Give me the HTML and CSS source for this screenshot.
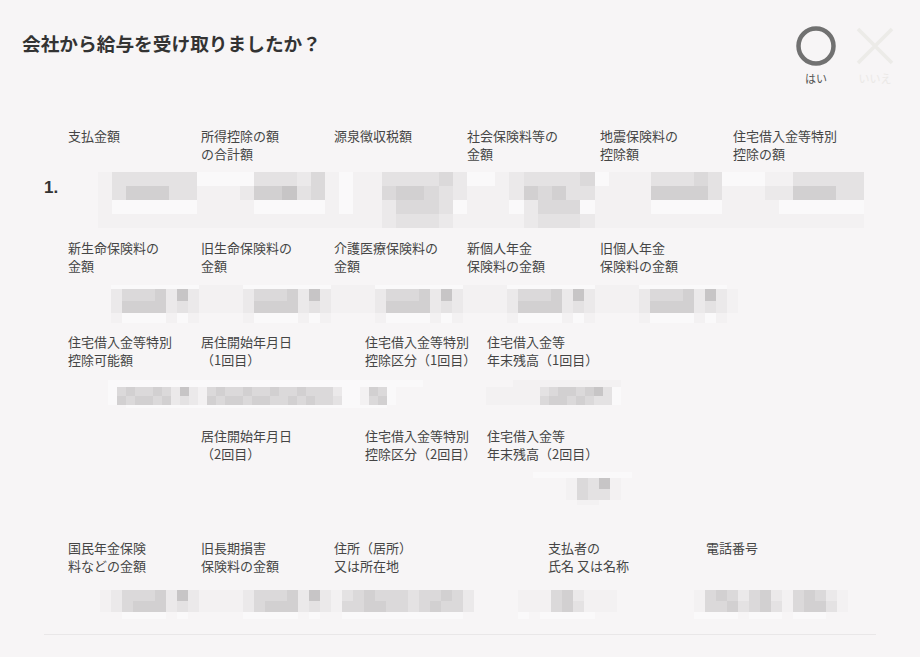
FILE: index.html
```html
<!DOCTYPE html>
<html lang="ja">
<head>
    <meta charset="UTF-8">
    <meta name="viewport" content="width=device-width, initial-scale=1.0">
    <title>給与の受け取り</title>
    <link rel="stylesheet" href="styles.css">
</head>
<body>
    <!-- Question header with yes / no answers -->
    <header class="question">
        <h1 class="question-title">会社から給与を受け取りましたか？</h1>
        <div class="answers">
            <button class="answer answer-yes">
                <svg width="40" height="40" viewBox="0 0 40 40">
                    <circle cx="20" cy="20" r="17.5" fill="none" stroke="#717171" stroke-width="4.5"/>
                </svg>
                <span>はい</span>
            </button>
            <button class="answer answer-no">
                <svg width="40" height="40" viewBox="0 0 40 40">
                    <path d="M3 3 L37 37 M37 3 L3 37" stroke="#ecebe8" stroke-width="3.5" fill="none"/>
                </svg>
                <span>いいえ</span>
            </button>
        </div>
    </header>

    <!-- Withholding slip fields (values are masked) -->
    <section class="slip">
        <div class="fields cols-6 row-1">
            <p>支払金額</p>
            <p>所得控除の額<br>の合計額</p>
            <p>源泉徴収税額</p>
            <p>社会保険料等の<br>金額</p>
            <p>地震保険料の<br>控除額</p>
            <p>住宅借入金等特別<br>控除の額</p>
        </div>
        <div class="values values-main">
            <span class="slip-no">1.</span>
            <div class="mosaic" data-w="14.2" data-h="14,14,14,14"
                 data-rows="1333333wwww333241w11333342ww1233334w11133343www1133333|1355533111255634 1w114554321112545331111555531112255533|1wwwwww1111wwwww1w1124443w111w2444w1111wwwww1111wwwwww|111111111111111111112333211111233321111111111111111111"></div>
        </div>

        <div class="fields cols-6 row-2">
            <p>新生命保険料の<br>金額</p>
            <p>旧生命保険料の<br>金額</p>
            <p>介護医療保険料の<br>金額</p>
            <p>新個人年金<br>保険料の金額</p>
            <p>旧個人年金<br>保険料の金額</p>
        </div>
        <div class="values values-2">
            <div class="mosaic" data-w="11" data-h="4,12,12,10"
                 data-rows="wwwwwwww1111wwwwwwww1111wwwwwwww1111wwwwwwww1111wwwwwwww|244452621111244452621111244452621111244452621111244452621|255552321111255552321111255552321111255552321111255552321|1wwww1w1....1wwww1w1....1wwww1w1....1wwww1w1....1wwww1w1"></div>
        </div>

        <div class="fields cols-loan row-3">
            <p>住宅借入金等特別<br>控除可能額</p>
            <p>居住開始年月日<br>（1回目）</p>
            <p>住宅借入金等特別<br>控除区分（1回目）</p>
            <p>住宅借入金等<br>年末残高（1回目）</p>
        </div>
        <div class="values values-3">
            <div class="mosaic" data-w="9" data-h="7,9,9,3"
                 data-rows="wwwwwwwwwwwwwwwwwwwwwwwwwwwwwwwwwww..........111111111111|w4544542621454454454454442ww154w..........1111113455456 3w|w545545232154554554454544 3ww145w..........1111114554543 3w|..wwwwwwwwwwwwwwwwwwwwwwwwwwwww"></div>
        </div>

        <div class="fields cols-loan row-4">
            <p></p>
            <p>居住開始年月日<br>（2回目）</p>
            <p>住宅借入金等特別<br>控除区分（2回目）</p>
            <p>住宅借入金等<br>年末残高（2回目）</p>
        </div>
        <div class="values values-4">
            <div class="mosaic" data-w="11" data-h="6,11,11,5"
                 data-rows="..wwwwwwwww|.....14361|.....14331|......11.."></div>
        </div>

        <div class="fields cols-payer row-5">
            <p>国民年金保険<br>料などの金額</p>
            <p>旧長期損害<br>保険料の金額</p>
            <p>住所（居所）<br>又は所在地</p>
            <p>支払者の<br>氏名 又は名称</p>
            <p>電話番号</p>
        </div>
        <div class="values values-5">
            <div class="mosaic" data-w="11" data-h="11,11,7"
                 data-rows="1244452621111244452621345444344542....111452111.......14542452145421|1245552321111245552321445544345442....111453111.......14453453145531|..wwww.w.....wwwww.w..wwwwwwwwwww.....w.wwwww.........wwww.www.www."></div>
        </div>

        <hr class="slip-rule">
    </section>

    <script src="script.js"></script>
</body>
</html>
```

FILE: styles.css
```css
/* Page */
body {
    margin: 0;
    background-color: #f7f5f6;
    font-family: "Noto Sans CJK JP", "Noto Sans", sans-serif;
    color: #444;
}

/* Question header */
.question {
    display: flex;
    justify-content: space-between;
    align-items: flex-start;
    height: 59px;
    padding: 26px 25px 0 22px;
}

.question-title {
    margin: 4px 0 0;
    font-size: 18.7px;
    line-height: 26px;
    font-weight: 700;
    color: #333;
}

.answers {
    display: flex;
    gap: 19px;
}

.answer {
    display: flex;
    flex-direction: column;
    align-items: center;
    width: 40px;
    padding: 0;
    border: none;
    background: none;
    font-family: inherit;
    cursor: pointer;
}

.answer svg {
    display: block;
}

.answer span {
    margin-top: 5px;
    font-size: 11px;
    line-height: 14px;
    white-space: nowrap;
}

.answer-yes span {
    color: #555;
}

.answer-no span {
    color: #ebe9e7;
}

/* Slip fields */
.fields {
    display: grid;
    padding-left: 68px;
}

.fields p {
    margin: 0;
    font-size: 13px;
    line-height: 18px;
    color: #454545;
    white-space: nowrap;
}

.cols-6 {
    grid-template-columns: repeat(6, 133px);
}

.cols-loan {
    grid-template-columns: 133px 164px 122px auto;
}

.cols-payer {
    grid-template-columns: 133px 133px 214px 158px auto;
}

.row-1 { margin-top: 42px; }
.row-2 { margin-top: 11px; }
.row-3 { margin-top: 10px; }
.row-4 { margin-top: 19px; }
.row-5 { margin-top: 34px; }

/* Masked values */
.values {
    display: flex;
    align-items: flex-start;
}

.values-main {
    margin-top: 9px;
    padding-left: 44px;
}

.slip-no {
    width: 54px;
    margin-top: 6px;
    font-family: "Liberation Sans", Arial, sans-serif;
    font-size: 17px;
    line-height: 20px;
    font-weight: 700;
    color: #333;
}

.values-2 { margin-top: 10px; padding-left: 111px; }
.values-3 { margin-top: 11px; padding-left: 108px; }
.values-4 { margin-top: 9px; padding-left: 511px; }
.values-5 { margin-top: 15px; padding-left: 100px; }

.mosaic-row {
    display: flex;
}

.cell {
    flex: none;
    width: var(--cw);
    height: 100%;
}

.c-0 { background: transparent; }
.c-w { background: #faf9fa; }
.c-1 { background: #f3f1f2; }
.c-2 { background: #ebe9ea; }
.c-3 { background: #e4e2e3; }
.c-4 { background: #dbd9da; }
.c-5 { background: #d2d0d1; }
.c-6 { background: #c7c5c6; }

.slip-rule {
    width: 832px;
    margin: 15px 0 0 44px;
    border: none;
    border-top: 1px solid #e9e7e8;
}
```

FILE: script.js
```js
// Build the pixelated blocks that hide each amount
document.querySelectorAll('.mosaic').forEach(function (box) {
    var heights = box.dataset.h.split(',');
    var rows = box.dataset.rows.split('|');
    box.style.setProperty('--cw', box.dataset.w + 'px');

    rows.forEach(function (row, i) {
        var line = document.createElement('div');
        line.className = 'mosaic-row';
        line.style.height = heights[i] + 'px';
        for (var k = 0; k < row.length; k++) {
            var ch = row[k];
            if (ch === ' ') continue;
            var cell = document.createElement('span');
            cell.className = 'cell c-' + (ch === '.' ? '0' : ch);
            line.appendChild(cell);
        }
        box.appendChild(line);
    });
});
```
